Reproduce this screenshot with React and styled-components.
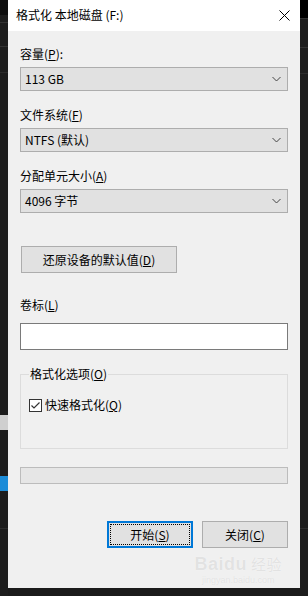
import styled, { createGlobalStyle } from "styled-components";

const GlobalStyle = createGlobalStyle`
  html, body {
    margin: 0;
    padding: 0;
    background: #1b1b1b;
  }
  body {
    font-family: "Noto Sans CJK SC", "Noto Sans", sans-serif;
    font-size: 12px;
    color: #000;
  }
`;

const Page = styled.div`
  display: flex;
  width: 308px;
  height: 596px;
  overflow: hidden;
`;

const Strip = styled.div`
  width: 8px;
  flex-shrink: 0;
  display: flex;
  flex-direction: column;
  background: #1d1d1d;
`;

const StripBlock = styled.div`
  height: ${(p) => p.$h}px;
  margin-top: ${(p) => p.$top || 0}px;
  background: ${(p) => p.$color};
  flex-shrink: 0;
`;

const Dialog = styled.div`
  position: relative;
  width: 292px;
  height: 588px;
  flex-shrink: 0;
  background: #f0f0f0;
  display: flex;
  flex-direction: column;
`;

const TitleBar = styled.div`
  height: 31px;
  background: #fff;
  display: flex;
  align-items: center;
  justify-content: space-between;
  padding: 0 10px 0 8px;
  flex-shrink: 0;
`;

const Title = styled.span`
  line-height: 16px;
  margin-top: -1px;
`;

const Body = styled.div`
  display: flex;
  flex-direction: column;
  padding: 0 12px;
`;

const Field = styled.div`
  display: flex;
  flex-direction: column;
  gap: ${(p) => p.$gap || 5}px;
  margin-top: ${(p) => p.$top}px;
`;

const Label = styled.div`
  line-height: 16px;
  height: 16px;
`;

const Select = styled.div`
  height: 24px;
  box-sizing: border-box;
  border: 1px solid #adadad;
  background: #e1e1e1;
  display: flex;
  align-items: center;
  justify-content: space-between;
  padding: 0 6px 0 4px;
  line-height: 16px;
`;

const Button = styled.div`
  position: relative;
  box-sizing: border-box;
  width: ${(p) => p.$w}px;
  height: 27px;
  border: ${(p) => (p.$focused ? "2px solid #0078d7" : "1px solid #adadad")};
  background: #e1e1e1;
  display: flex;
  align-items: center;
  justify-content: center;
  line-height: 16px;

  ${(p) =>
    p.$focused &&
    `
    &::after {
      content: "";
      position: absolute;
      inset: 1px;
      border: 1px dotted #000;
    }
  `}
`;

const ResetButton = styled(Button)`
  margin-top: 33px;
  margin-left: 1px;
`;

const TextInput = styled.div`
  height: 27px;
  box-sizing: border-box;
  border: 1px solid #7a7a7a;
  background: #fff;
`;

const Group = styled.fieldset`
  margin: 16px 0 0;
  padding: 15px 8px 0 8px;
  height: 83px;
  box-sizing: border-box;
  border: 1px solid #dcdcdc;
  min-width: 0;
`;

const Legend = styled.legend`
  padding: 0 1px;
  line-height: 16px;
`;

const CheckRow = styled.div`
  display: flex;
  align-items: center;
  gap: 3px;
  line-height: 16px;
`;

const Checkbox = styled.span`
  width: 13px;
  height: 13px;
  box-sizing: border-box;
  border: 1px solid #333;
  background: #fff;
  display: flex;
  align-items: center;
  justify-content: center;
`;

const Progress = styled.div`
  margin-top: 18px;
  height: 17px;
  box-sizing: border-box;
  border: 1px solid #bcbcbc;
  background: #e6e6e6;
`;

const Actions = styled.div`
  display: flex;
  justify-content: flex-end;
  gap: 9px;
  margin-top: 37px;
`;

const Watermark = styled.div`
  position: absolute;
  right: 18px;
  bottom: 2px;
  display: flex;
  flex-direction: column;
  align-items: center;
  color: #e2e2e2;
  text-shadow: 0 0 1px #fff;
  pointer-events: none;
`;

const WatermarkLogo = styled.div`
  font-family: "Liberation Sans", sans-serif;
  font-size: 18px;
  font-weight: bold;
  line-height: 22px;
  letter-spacing: 0.5px;

  span {
    font-family: "Noto Sans CJK SC", sans-serif;
    font-weight: normal;
    font-size: 15px;
    margin-left: 4px;
  }
`;

const WatermarkUrl = styled.div`
  font-family: "Liberation Sans", sans-serif;
  font-size: 9px;
  line-height: 11px;
`;

const Chevron = () => (
  <svg width="9" height="6" viewBox="0 0 9 6">
    <path d="M0.5 1 L4.5 5 L8.5 1" fill="none" stroke="#444" strokeWidth="1" />
  </svg>
);

const CloseIcon = () => (
  <svg width="11" height="11" viewBox="0 0 11 11">
    <path d="M0.5 0.5 L10.5 10.5 M10.5 0.5 L0.5 10.5" stroke="#000" strokeWidth="1" />
  </svg>
);

const CheckMark = () => (
  <svg width="11" height="11" viewBox="0 0 11 11">
    <path d="M1.5 5.5 L4 8 L9.5 2.5" fill="none" stroke="#333" strokeWidth="1.2" />
  </svg>
);

const App = () => {
  return (
    <>
      <GlobalStyle />
      <Page>
        <Strip>
          <StripBlock $h={15} $color="#0e0e0e" />
          <StripBlock $h={1} $top={7} $color="#333" />
          <StripBlock $h={1} $top={23} $color="#333" />
          <StripBlock $h={1} $top={25} $color="#2c2c2c" />
          <StripBlock $h={15} $top={342} $color="#cfcfcf" />
          <StripBlock $h={15} $top={46} $color="#1c8cd8" />
          <StripBlock $h={1} $top={37} $color="#2e2e2e" />
        </Strip>

        <Dialog>
          <TitleBar>
            <Title>格式化 本地磁盘 (F:)</Title>
            <CloseIcon />
          </TitleBar>

          <Body>
            <Field $top={15}>
              <Label>
                容量(<u>P</u>):
              </Label>
              <Select>
                113 GB
                <Chevron />
              </Select>
            </Field>

            <Field $top={16}>
              <Label>
                文件系统(<u>F</u>)
              </Label>
              <Select>
                NTFS (默认)
                <Chevron />
              </Select>
            </Field>

            <Field $top={16}>
              <Label>
                分配单元大小(<u>A</u>)
              </Label>
              <Select>
                4096 字节
                <Chevron />
              </Select>
            </Field>

            <ResetButton $w={156}>
              还原设备的默认值(<u>D</u>)
            </ResetButton>

            <Field $top={24} $gap={10}>
              <Label>
                卷标(<u>L</u>)
              </Label>
              <TextInput />
            </Field>

            <Group>
              <Legend>
                格式化选项(<u>O</u>)
              </Legend>
              <CheckRow>
                <Checkbox>
                  <CheckMark />
                </Checkbox>
                <span>
                  快速格式化(<u>Q</u>)
                </span>
              </CheckRow>
            </Group>

            <Progress />

            <Actions>
              <Button $w={86} $focused>
                开始(<u>S</u>)
              </Button>
              <Button $w={86}>
                关闭(<u>C</u>)
              </Button>
            </Actions>
          </Body>

          <Watermark>
            <WatermarkLogo>
              Baidu<span>经验</span>
            </WatermarkLogo>
            <WatermarkUrl>jingyan.baidu.com</WatermarkUrl>
          </Watermark>
        </Dialog>

        <Strip>
          <StripBlock $h={18} $color="#000" />
          <StripBlock $h={1} $top={0} $color="#333" />
          <StripBlock $h={1} $top={28} $color="#333" />
          <StripBlock $h={1} $top={25} $color="#2c2c2c" />
          <StripBlock $h={1} $top={454} $color="#2e2e2e" />
        </Strip>
      </Page>
    </>
  );
};

export default App;
